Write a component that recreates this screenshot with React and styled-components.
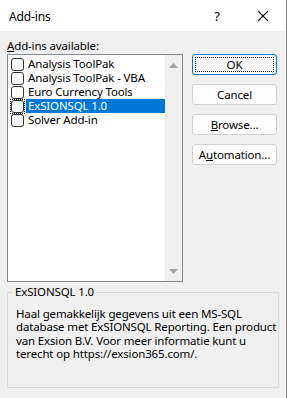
import React from "react";
import styled, { createGlobalStyle } from "styled-components";

const items = [
    "Analysis ToolPak",
    "Analysis ToolPak - VBA",
    "Euro Currency Tools",
    "ExSIONSQL 1.0",
    "Solver Add-in",
];

export default function App() {
    const selected = 3;

    return (
        <Window>
            <GlobalStyle />
            <TitleBar>
                <Title>Add-ins</Title>
                <TitleButtons>
                    <Help>?</Help>
                    <Close>
                        <svg width="12" height="12" viewBox="0 0 12 12">
                            <path d="M1 1 L11 11 M11 1 L1 11" stroke="#111" strokeWidth="1.1" fill="none" />
                        </svg>
                    </Close>
                </TitleButtons>
            </TitleBar>

            <Body>
                <Top>
                    <ListColumn>
                        <Label><u>A</u>dd-ins available:</Label>
                        <ListBox>
                            <Items>
                                {items.map((name, i) => (
                                    <Row key={name}>
                                        <CheckWrap $focus={i === selected}>
                                            <Check />
                                        </CheckWrap>
                                        <ItemText $selected={i === selected}>{name}</ItemText>
                                    </Row>
                                ))}
                            </Items>
                            <ScrollBar>
                                <Arrow viewBox="0 0 9 5">
                                    <path d="M0 5 L4.5 0 L9 5 Z" fill="#a3a3a3" />
                                </Arrow>
                                <Arrow viewBox="0 0 9 5">
                                    <path d="M0 0 L4.5 5 L9 0 Z" fill="#a3a3a3" />
                                </Arrow>
                            </ScrollBar>
                        </ListBox>
                    </ListColumn>

                    <Buttons>
                        <Button $default>
                            <FocusRect>OK</FocusRect>
                        </Button>
                        <Button>Cancel</Button>
                        <Button><u>B</u>rowse...</Button>
                        <Button>A<u>u</u>tomation...</Button>
                    </Buttons>
                </Top>

                <GroupBox>
                    <Legend>ExSIONSQL 1.0</Legend>
                    <Description>
                        Haal gemakkelijk gegevens uit een MS-SQL<br />
                        database met ExSIONSQL Reporting. Een product<br />
                        van Exsion B.V. Voor meer informatie kunt u<br />
                        terecht op https://exsion365.com/.
                    </Description>
                </GroupBox>
            </Body>
        </Window>
    );
}

const GlobalStyle = createGlobalStyle`
    html, body {
        margin: 0;
        padding: 0;
        background: #f0f0f0;
    }
    body {
        font-family: "Noto Sans", "Liberation Sans", sans-serif;
        font-size: 11.5px;
        letter-spacing: -0.15px;
        color: #000;
    }
`;

const Window = styled.div`
    width: 287px;
    height: 398px;
    box-sizing: border-box;
    border-right: 1px solid #8a8a8a;
    background: #f0f0f0;
    display: flex;
    flex-direction: column;
    overflow: hidden;
`;

const TitleBar = styled.div`
    height: 31px;
    background: #ffffff;
    display: flex;
    align-items: center;
    justify-content: space-between;
    padding-left: 9px;
`;

const Title = styled.div`
    font-size: 12px;
    margin-top: 1px;
`;

const TitleButtons = styled.div`
    display: flex;
    align-items: center;
    height: 100%;
`;

const Help = styled.div`
    width: 46px;
    text-align: center;
    font-size: 13px;
`;

const Close = styled.div`
    width: 46px;
    display: flex;
    justify-content: center;
    align-items: center;
`;

const Body = styled.div`
    flex: 1;
    padding: 8px 7px 0 7px;
    display: flex;
    flex-direction: column;
`;

const Top = styled.div`
    display: flex;
    justify-content: space-between;
`;

const ListColumn = styled.div`
    display: flex;
    flex-direction: column;
`;

const Label = styled.div`
    height: 15px;
    line-height: 14px;
`;

const ListBox = styled.div`
    width: 176px;
    height: 228px;
    box-sizing: border-box;
    border: 1px solid #828790;
    background: #ffffff;
    display: flex;
`;

const Items = styled.div`
    flex: 1;
    padding: 2px 0 0 2px;
    display: flex;
    flex-direction: column;
`;

const Row = styled.div`
    height: 14px;
    display: flex;
    align-items: center;
`;

const CheckWrap = styled.div`
    width: 15px;
    height: 15px;
    box-sizing: border-box;
    display: flex;
    align-items: center;
    justify-content: center;
    outline: ${p => (p.$focus ? "1px dotted #000" : "none")};
    outline-offset: -1px;
`;

const Check = styled.div`
    width: 13px;
    height: 13px;
    box-sizing: border-box;
    border: 1px solid #333333;
    border-radius: 3px;
    background: #ffffff;
`;

const ItemText = styled.div`
    height: 14px;
    line-height: 14px;
    padding-left: 2px;
    margin-left: 1px;
    flex: 1;
    background: ${p => (p.$selected ? "#0078d7" : "transparent")};
    color: ${p => (p.$selected ? "#ffffff" : "#000000")};
`;

const ScrollBar = styled.div`
    width: 17px;
    background: #f0f0f0;
    display: flex;
    flex-direction: column;
    justify-content: space-between;
    align-items: center;
    padding: 8px 0 7px 0;
`;

const Arrow = styled.svg`
    width: 9px;
    height: 5px;
`;

const Buttons = styled.div`
    display: flex;
    flex-direction: column;
    gap: 9px;
    padding-top: 15px;
    margin-right: 2px;
`;

const Button = styled.div`
    width: 85px;
    height: 21px;
    box-sizing: border-box;
    border: 1px solid ${p => (p.$default ? "#0078d7" : "#d0d0d0")};
    border-radius: 3px;
    background: #fdfdfd;
    display: flex;
    align-items: center;
    justify-content: center;
    padding: 2px;
    line-height: 14px;
`;

const FocusRect = styled.div`
    width: 100%;
    height: 100%;
    box-sizing: border-box;
    border: 1px dotted #000;
    display: flex;
    align-items: center;
    justify-content: center;
`;

const GroupBox = styled.div`
    position: relative;
    margin-top: 10px;
    width: 272px;
    height: 96px;
    box-sizing: border-box;
    border: 1px solid #dcdcdc;
    padding: 14px 8px 0 8px;
`;

const Legend = styled.div`
    position: absolute;
    top: -8px;
    left: 5px;
    padding: 0 2px;
    background: #f0f0f0;
    line-height: 14px;
`;

const Description = styled.div`
    line-height: 13.3px;
    white-space: nowrap;
`;
